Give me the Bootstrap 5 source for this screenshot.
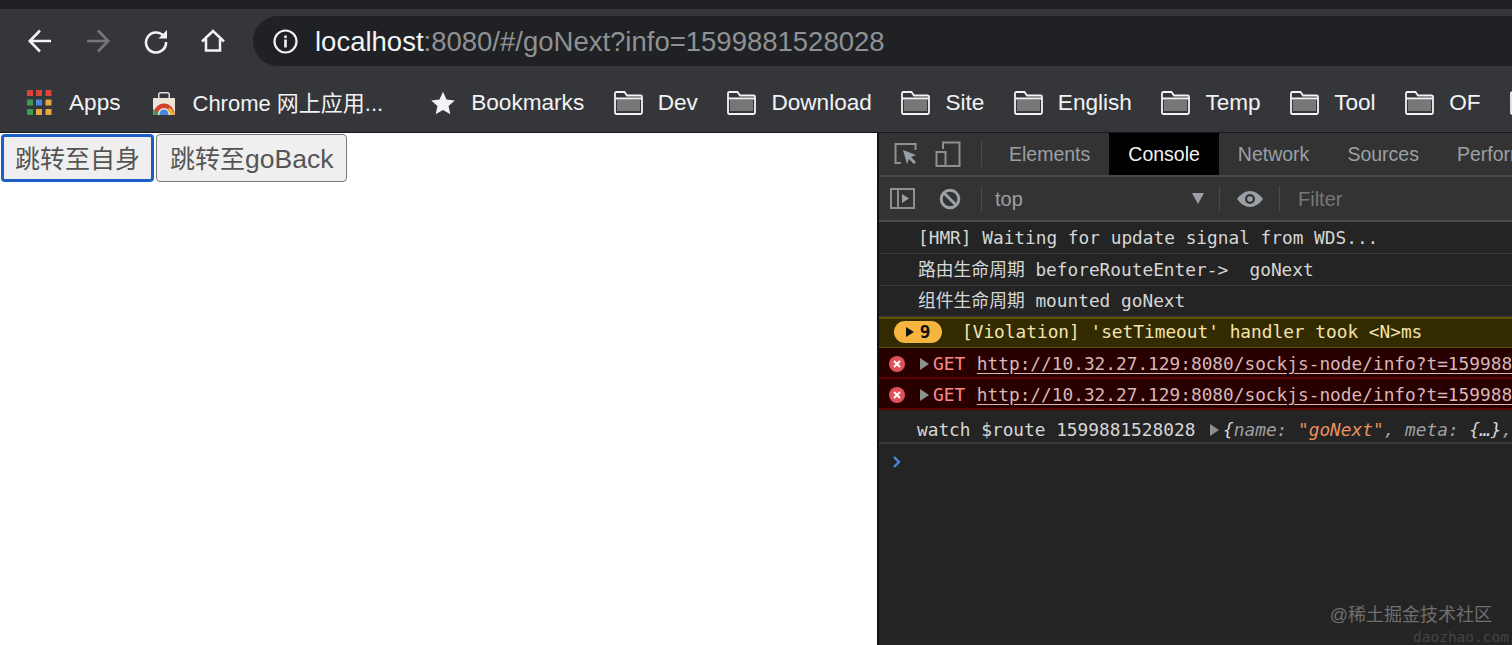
<!DOCTYPE html>
<html lang="zh">
<head>
<meta charset="utf-8">
<title>goNext</title>
<link href="https://cdn.jsdelivr.net/npm/bootstrap@5.3.0/dist/css/bootstrap.min.css" rel="stylesheet">
<style>
html,body{height:645px;overflow:hidden;background:#fff}
body{font-family:"Liberation Sans","Noto Sans CJK SC",sans-serif}
.strip{height:9px;background:#202125}
.toolbar-row{height:57px;background:#35363a;padding-left:27px}
.nav-ico{width:26px;height:26px;flex:none;margin-right:32px;margin-top:19px}
.nav-ico.tight{margin-right:31px}
.nav-ico.last{margin-right:27px}
.addr{height:50px;flex:1;margin-top:7px;background:#202124;border-radius:25px 0 0 25px;padding-left:20px;white-space:nowrap;overflow:hidden;font-size:27.5px;color:#8f9194}
.addr b{font-weight:400;color:#f1f3f4}
.addr svg{margin-right:17px;flex:none}
.addr span{padding-top:1px}
.marks{height:67px;background:#35363a;border-bottom:1px solid #17181a;padding-left:27px;padding-top:8px;white-space:nowrap;overflow:hidden;font-size:22.6px;color:#f1f3f4}
.mark-item{margin-right:29.500px;flex:none}
.mark-item svg{flex:none;margin-right:15px}
.mark-item.wide svg{margin-right:17px}
.mark-item.apps-item{margin-right:31px}
.mark-item.store-item{margin-right:47.500px;font-size:22px}
.mark-item.star-item svg{margin-right:16.500px}
.work{height:512px}
.pagearea{width:877px;flex:none;background:#fff;padding:1px 0 0 1px}
.pbtn{height:48px;padding:2px 13px 0;font-size:25px;line-height:1;color:#555;background:#efefef;border:1.5px solid #7a7a7a;border-radius:4px;margin-right:2px;white-space:nowrap}
.pbtn.focused{border:3px solid #1b5fc6;width:153px;padding:2px 10px 0}
.pbtn:hover{color:#555;background:#efefef}
.latin{font-size:26.500px}
.devtools{flex:1;min-width:0;background:#242424;border-left:2px solid #111;position:relative;overflow:hidden}
.dtabs{height:44px;background:#333;border-bottom:2px solid #4a4a4a;padding-left:14px;font-size:19.500px;color:#9aa0a6;white-space:nowrap;overflow:hidden}
.dtabs svg,.dbar svg{flex:none}
.dtab{height:42px;line-height:42px;padding:0 19px;flex:none}
.dtab.active{background:#000;color:#f1f3f4}
.vsep{width:1px;height:26px;background:#4a4a4a;flex:none}
.dbar{height:45px;background:#333;border-bottom:2px solid #4a4a4a;padding-left:11px;font-size:20px;color:#9aa0a6;white-space:nowrap;overflow:hidden}
.gap-a{margin-right:24px}
.gap-b{margin-right:20px}
.gap-c{margin-right:13px}
.gap-d{margin-left:14px;margin-right:17px}
.gap-e{margin-right:16px}
.gap-f{margin-right:18px}
.topname{width:196px;flex:none}
.filter-ph{color:#777}
.lines{font-family:"DejaVu Sans Mono","Noto Sans CJK SC",monospace;font-size:17.8px;color:#d6d6d6;white-space:nowrap}
.ln{height:32px;line-height:31px;border-bottom:1px solid #3a3a3a;padding-left:39px;overflow:hidden}
.ln.short{height:31px;line-height:30px}
.ln.warn{height:31px;background:#332b00;border-top:2px solid #5f5200;border-bottom:1px solid #5f5200;color:#f4e3b0;padding-left:15px;padding-bottom:2px;line-height:26px}
.ln.err{height:31px;line-height:29px;background:#290000;border-bottom:2px solid #5c0000;color:#ff8a8a;padding-left:10px;padding-top:2px}
.ln.plain{height:34px;border-bottom:2px solid #3a3a3a;padding-left:38px;padding-top:7px}
.count{width:48px;height:22px;border-radius:11px;background:#f5b53f;color:#111;font-weight:700;line-height:22px;margin-right:20px;flex:none;gap:6px}
.tri{width:0;height:0;border-left:9px solid #8f8f8f;border-top:6px solid transparent;border-bottom:6px solid transparent;flex:none}
.tri.dk{border-left-color:#111;border-left-width:8px;border-top-width:5px;border-bottom-width:5px}
.tri.gett{margin-left:1px;margin-right:4px}
.urlt{color:#d6b8b8;text-decoration:underline;text-underline-offset:3px;margin-left:1px}
.errx{flex:none;margin-right:14px}
.dim{color:#a0a0a0;font-style:italic}
.str{color:#e8925e;font-style:italic}
.brace{color:#d6d6d6}
.prompt{padding:4px 0 0 13px}
.wmark{position:absolute;right:20px;top:471px;font-size:18px;color:#6f6f6f;line-height:22px;white-space:nowrap}
.wmark2{position:absolute;right:3px;top:494px;font-family:"DejaVu Sans Mono",monospace;font-size:14.500px;color:#444;white-space:nowrap}
</style>
</head>
<body>
<div class="strip"></div>
<div class="toolbar-row d-flex align-items-start">
  <svg class="nav-ico" viewBox="0 0 26 26" fill="none" stroke="#f1f3f4" stroke-width="2.6"><path d="M24 13H3M13 2.500 2.800 13 13 23.500"/></svg>
  <svg class="nav-ico" viewBox="0 0 26 26" fill="none" stroke="#75777a" stroke-width="2.6"><path d="M2 13h21M13 2.500 23.200 13 13 23.500"/></svg>
  <svg class="nav-ico tight" viewBox="0 0 26 26" fill="none" stroke="#f1f3f4" stroke-width="2.6"><path d="M21 8.500A10 10 0 1 0 23 14"/><path d="M24 2v8.500h-8.500z" fill="#f1f3f4" stroke="none"/></svg>
  <svg class="nav-ico last" viewBox="0 0 26 26" fill="none" stroke="#f1f3f4" stroke-width="2.500"><path d="M2 13.500 13 3l11 10.500M6 11v11.500h14V11"/></svg>
  <div class="addr d-flex align-items-center">
    <svg width="25" height="25" viewBox="0 0 25 25" fill="none"><circle cx="12.500" cy="12.500" r="11" stroke="#f1f3f4" stroke-width="2.200"/><rect x="11.200" y="10.500" width="2.600" height="8" fill="#f1f3f4"/><rect x="11.200" y="6.500" width="2.600" height="2.600" fill="#f1f3f4"/></svg>
    <span><b>localhost</b>:8080/#/goNext?info=1599881528028</span>
  </div>
</div>
<div class="marks d-flex align-items-center">
  <div class="mark-item wide apps-item d-flex align-items-center">
    <svg width="25" height="25" viewBox="0 0 25 25"><g fill="#d9453a"><rect width="6" height="6"/><rect x="9" width="6" height="6"/><rect x="18.500" width="6" height="6"/></g><rect y="9.500" width="6" height="6" fill="#3f9a56"/><rect x="9" y="9.500" width="6" height="6" fill="#4a86e0"/><rect x="18.500" y="9.500" width="6" height="6" fill="#e9a63a"/><rect y="19" width="6" height="6" fill="#3f9a56"/><rect x="9" y="19" width="6" height="6" fill="#e9a63a"/><rect x="18.500" y="19" width="6" height="6" fill="#e9a63a"/></svg>
    <span>Apps</span>
  </div>
  <div class="mark-item wide store-item d-flex align-items-center">
    <svg width="24" height="24" viewBox="0 0 24 24"><path d="M1 7h22v17H1z" fill="#ece6d8"/><path d="M6 7V3.500Q6 1 8.500 1h7Q18 1 18 3.500V7h-1.500V3.500Q16.500 2.500 15.500 2.500h-7Q7.500 2.500 7.500 3.500V7z" fill="#ddd"/><path d="M1.500 24A10.500 11.500 0 0 1 22.500 24h-4A6.500 7 0 0 0 5.500 24z" fill="#d8402f"/><path d="M1 18 1.500 24h4l1-2z" fill="#3f9a56"/><path d="M17 16.500q4 1.500 5.500 7.500h-4q-.5-2.500-2.500-4z" fill="#e5b82f"/><circle cx="12" cy="23" r="4.500" fill="#4a86e0"/></svg>
    <span>Chrome 网上应用...</span>
  </div>
  <div class="mark-item star-item d-flex align-items-center">
    <svg width="24" height="24" viewBox="0 0 24 24"><path d="m12 .8 3.500 7.700 8.300.9-6.200 5.600 1.700 8.200L12 19l-7.300 4.200 1.700-8.200L.2 9.400l8.300-.9z" fill="#f1f3f4"/></svg>
    <span>Bookmarks</span>
  </div>
  <div class="mark-item d-flex align-items-center"><svg width="29" height="24" viewBox="0 0 29 24"><use href="#fold"/></svg><span>Dev</span></div>
  <div class="mark-item d-flex align-items-center"><svg width="29" height="24" viewBox="0 0 29 24"><use href="#fold"/></svg><span>Download</span></div>
  <div class="mark-item d-flex align-items-center"><svg width="29" height="24" viewBox="0 0 29 24"><use href="#fold"/></svg><span>Site</span></div>
  <div class="mark-item d-flex align-items-center"><svg width="29" height="24" viewBox="0 0 29 24"><use href="#fold"/></svg><span>English</span></div>
  <div class="mark-item d-flex align-items-center"><svg width="29" height="24" viewBox="0 0 29 24"><use href="#fold"/></svg><span>Temp</span></div>
  <div class="mark-item d-flex align-items-center"><svg width="29" height="24" viewBox="0 0 29 24"><use href="#fold"/></svg><span>Tool</span></div>
  <div class="mark-item d-flex align-items-center"><svg width="29" height="24" viewBox="0 0 29 24"><use href="#fold"/></svg><span>OF</span></div>
  <div class="mark-item d-flex align-items-center"><svg width="29" height="24" viewBox="0 0 29 24"><use href="#fold"/></svg></div>
</div>
<svg width="0" height="0" class="d-block"><defs><g id="fold"><path d="M3 9h23v11H3z" fill="#777"/><path d="M1 21.500V2.500Q1 1 2.500 1h8l2.500 3.500h13.500Q28 4.500 28 6v15.500Q28 23 26.500 23h-24Q1 23 1 21.500zM1 7.500h27" fill="none" stroke="#f1f3f4" stroke-width="1.800"/></g></defs></svg>
<div class="work d-flex">
  <div class="pagearea d-flex align-items-start">
    <button class="btn pbtn focused" type="button">跳转至自身</button>
    <button class="btn pbtn" type="button">跳转至<span class="latin">goBack</span></button>
  </div>
  <div class="devtools">
    <div class="dtabs d-flex align-items-center">
      <svg width="26" height="26" viewBox="0 0 26 26" fill="none" class="me-3"><path d="M8 22H2.500V3h20v6" stroke="#8f8f8f" stroke-width="2"/><path d="m10 9 13 5-5 2 5 5-2 2-5-5-2 5z" fill="#9aa0a6"/></svg>
      <svg width="26" height="26" viewBox="0 0 26 26" fill="none" class="me-3"><path d="M8 8V1.500h16.500V25H11" stroke="#8f8f8f" stroke-width="2"/><rect x="1.500" y="11" width="9" height="14" stroke="#8f8f8f" stroke-width="2"/></svg>
      <div class="vsep ms-1 me-1"></div>
      <div class="dtab ms-1">Elements</div>
      <div class="dtab active">Console</div>
      <div class="dtab">Network</div>
      <div class="dtab">Sources</div>
      <div class="dtab">Performance</div>
    </div>
    <div class="dbar d-flex align-items-center">
      <svg width="25" height="21" viewBox="0 0 25 21" fill="none" class="gap-a"><rect x="1" y="1" width="23" height="19" stroke="#8f8f8f" stroke-width="2"/><path d="M8 1v19" stroke="#8f8f8f" stroke-width="2"/><path d="m12 6 7 4.500-7 4.500z" fill="#9aa0a6"/></svg>
      <svg width="22" height="22" viewBox="0 0 22 22" fill="none" class="gap-b"><circle cx="11" cy="11" r="8.800" stroke="#9aa0a6" stroke-width="3"/><path d="m5 5 12 12" stroke="#9aa0a6" stroke-width="3"/></svg>
      <div class="vsep gap-c"></div>
      <span class="topname">top</span>
      <svg width="14" height="11" viewBox="0 0 14 11"><path d="M1 0h12L7 11z" fill="#9aa0a6"/></svg>
      <div class="vsep gap-d"></div>
      <svg width="26" height="16" viewBox="0 0 26 16" class="gap-e"><path d="M0 8Q6 0 13 0t13 8q-6 8-13 8T0 8z" fill="#9aa0a6"/><circle cx="13" cy="8" r="5" fill="#333"/><circle cx="13" cy="8" r="2.800" fill="#9aa0a6"/></svg>
      <div class="vsep gap-f"></div>
      <span class="filter-ph">Filter</span>
    </div>
    <div class="lines">
      <div class="ln">[HMR] Waiting for update signal from WDS...</div>
      <div class="ln">路由生命周期 beforeRouteEnter-&gt;&nbsp; goNext</div>
      <div class="ln short">组件生命周期 mounted goNext</div>
      <div class="ln warn d-flex align-items-center"><span class="count d-flex align-items-center justify-content-center"><i class="tri dk"></i>9</span><span>[Violation] 'setTimeout' handler took &lt;N&gt;ms</span></div>
      <div class="ln err d-flex align-items-center">
        <svg class="errx" width="16" height="16" viewBox="0 0 16 16"><circle cx="8" cy="8" r="8" fill="#e0505a"/><path d="m5 5 6 6m0-6-6 6" stroke="#fff" stroke-width="2"/></svg>
        <i class="tri gett"></i><span>GET&nbsp;</span><span class="urlt">http://10.32.27.129:8080/sockjs-node/info?t=1599881528028</span>
      </div>
      <div class="ln err d-flex align-items-center">
        <svg class="errx" width="16" height="16" viewBox="0 0 16 16"><circle cx="8" cy="8" r="8" fill="#e0505a"/><path d="m5 5 6 6m0-6-6 6" stroke="#fff" stroke-width="2"/></svg>
        <i class="tri gett"></i><span>GET&nbsp;</span><span class="urlt">http://10.32.27.129:8080/sockjs-node/info?t=1599881528028</span>
      </div>
      <div class="ln plain d-flex align-items-center">watch $route 1599881528028&nbsp;<i class="tri mx-1"></i><span class="dim"><span class="brace">{</span>name: <span class="str">"goNext"</span>, meta: <span class="brace">{…}</span>, path: "/goNext"}</span></div>
      <div class="prompt"><svg width="10" height="14" viewBox="0 0 10 14" fill="none"><path d="m2 2 5 5-5 5" stroke="#4a86e0" stroke-width="2.400"/></svg></div>
    </div>
    <div class="wmark">@稀土掘金技术社区</div>
    <div class="wmark2">daozhao.com</div>
  </div>
</div>
</body>
</html>
